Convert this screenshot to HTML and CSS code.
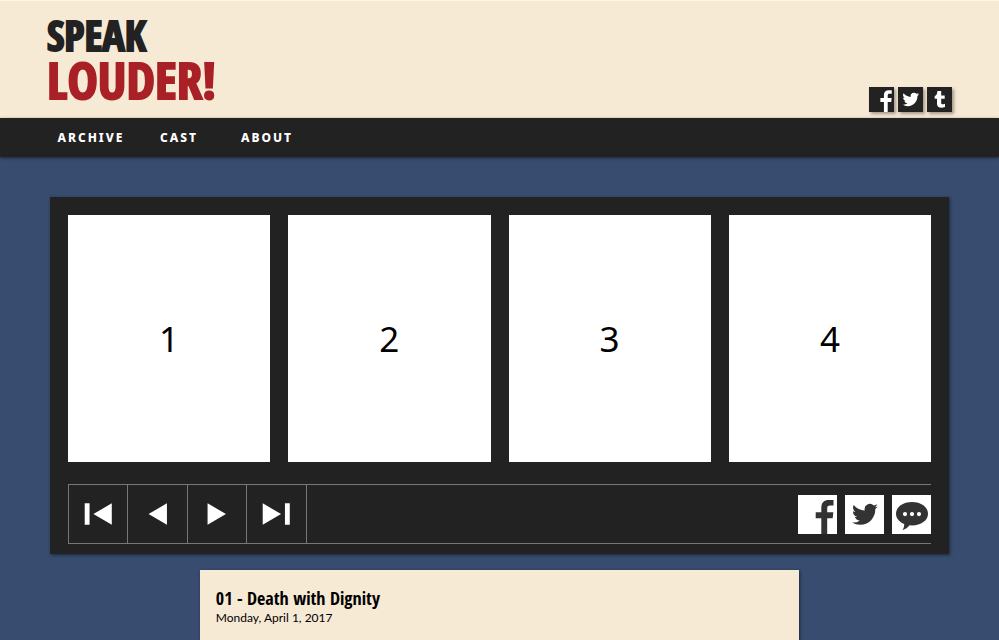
FILE: index.html
```html
<!DOCTYPE html>
<html lang="en">
<head>
  <meta charset="utf-8">
  <meta name="viewport" content="width=device-width, initial-scale=1">
  <title>Speak Louder!</title>
  <link rel="stylesheet" href="styles.css">
</head>
<body>
  <svg class="symbols" aria-hidden="true">
    <symbol id="facebook" viewBox="0 0 39 39">
      <path d="M23.3 39V23.3H17.7V17.3H23.3V13C23.3 7.6 26 5 31 5H35.5V10.6H32.2C29.8 10.6 29.2 11.5 29.2 13.5V17.3H35.3L34.7 23.3H29.2V39Z"/>
    </symbol>
    <symbol id="twitter" viewBox="0 0 39 39">
      <path transform="translate(7 7.6) scale(1.08)" d="M23.95 3.55a10 10 0 0 1-2.82.77 4.96 4.96 0 0 0 2.16-2.72c-.95.55-2 .96-3.13 1.18a4.92 4.92 0 0 0-8.38 4.48C7.69 7.07 4.07 5.1 1.64 2.14a4.9 4.9 0 0 0 1.52 6.56 4.9 4.9 0 0 1-2.23-.61v.06a4.92 4.92 0 0 0 3.95 4.82 5 5 0 0 1-2.21.08 4.94 4.94 0 0 0 4.6 3.42A9.87 9.87 0 0 1 0 18.4a14 14 0 0 0 7.55 2.2c9.05 0 14-7.5 14-13.98 0-.21 0-.42-.02-.63a9.94 9.94 0 0 0 2.46-2.54z"/>
    </symbol>
    <symbol id="tumblr" viewBox="0 0 25 25">
      <path d="M10.4 4H14.2V8.5H17.7V11.8H14.2V16C14.2 17.6 15.8 17.7 18 16.8V19.9C13.5 21.6 10 20.4 10 17V11.8H7.7V9C9.4 8.4 10.2 7 10.4 4Z"/>
    </symbol>
    <symbol id="comment" viewBox="0 0 39 39">
      <path fill-rule="evenodd" d="M20 7C29 7 36 12 36 18.8C36 25.6 29 30.4 20 30.4L17.6 30.3C15.8 32.6 13.4 34.4 10.4 35.2C11.6 33.4 12.3 31.5 12.2 29C7.3 27 4 23.3 4 18.8C4 12 11 7 20 7ZM13 17a2.1 2.1 0 1 0 0 4.2a2.1 2.1 0 1 0 0-4.2ZM20 17a2.1 2.1 0 1 0 0 4.2a2.1 2.1 0 1 0 0-4.2ZM27 17a2.1 2.1 0 1 0 0 4.2a2.1 2.1 0 1 0 0-4.2Z"/>
    </symbol>
  </svg>

  <header class="masthead">
    <a class="logo" href="#"><span class="logo-top">SPEAK</span><span class="logo-bottom">LOUDER!</span></a>
    <div class="social">
      <a href="#" aria-label="Facebook"><svg><use href="#facebook"/></svg></a>
      <a href="#" aria-label="Twitter"><svg><use href="#twitter"/></svg></a>
      <a href="#" aria-label="Tumblr"><svg><use href="#tumblr"/></svg></a>
    </div>
  </header>

  <nav class="menu">
    <a href="#">ARCHIVE</a>
    <a href="#">CAST</a>
    <a href="#">ABOUT</a>
  </nav>

  <main>
    <section class="comic">
      <div class="panels">
        <div class="panel">1</div>
        <div class="panel">2</div>
        <div class="panel">3</div>
        <div class="panel">4</div>
      </div>
      <div class="controls">
        <div class="pager">
          <button type="button" aria-label="First"><svg viewBox="0 0 60 60"><path d="M16 19v22h5v-22zM44 19v22L25 30z"/></svg></button>
          <button type="button" aria-label="Previous"><svg viewBox="0 0 60 60"><path d="M40 19v22L21 30z"/></svg></button>
          <button type="button" aria-label="Next"><svg viewBox="0 0 60 60"><path d="M20 19v22L39 30z"/></svg></button>
          <button type="button" aria-label="Last"><svg viewBox="0 0 60 60"><path d="M16 19v22L35 30zM39 19h5v22h-5z"/></svg></button>
        </div>
        <div class="share">
          <a href="#" aria-label="Share on Facebook"><svg><use href="#facebook"/></svg></a>
          <a href="#" aria-label="Share on Twitter"><svg><use href="#twitter"/></svg></a>
          <a href="#" aria-label="Comments"><svg><use href="#comment"/></svg></a>
        </div>
      </div>
    </section>

    <article class="post">
      <h1>01 - Death with Dignity</h1>
      <p>Monday, April 1, 2017</p>
    </article>
  </main>
</body>
</html>
```
FILE: styles.css
```css
* {
  box-sizing: border-box;
}

body {
  display: flex;
  flex-direction: column;
  min-height: 100vh;
  margin: 0;
  background: #374c6e;
  font-family: "Noto Sans", sans-serif;
}

.symbols {
  display: none;
}

a {
  color: inherit;
  text-decoration: none;
}

svg {
  display: block;
  width: 100%;
  height: 100%;
  fill: currentColor;
}

.masthead {
  display: flex;
  justify-content: space-between;
  align-items: flex-end;
  padding: 13px 47px 6px;
  border-top: 1px solid #fbf5ea;
  background: #f7ead5;
}

.logo {
  display: flex;
  flex-direction: column;
  padding-bottom: 10px;
  font-family: "Open Sans Condensed", "Roboto Condensed", sans-serif;
  font-weight: bold;
  -webkit-text-stroke: 2px currentColor;
}

.logo-top {
  color: #222;
  font-size: 42px;
  line-height: 42px;
}

.logo-bottom {
  color: #a92027;
  font-size: 51px;
  line-height: 46px;
}

.social {
  display: flex;
  gap: 4px;
}

.social a {
  width: 25px;
  height: 25px;
  background: #222;
  color: #fff;
  box-shadow: 2px 2px 3px rgba(0, 0, 0, 0.35);
}

.menu {
  display: flex;
  padding: 0 47px;
  background: #222;
  color: #fff;
  box-shadow: 0 1px 3px rgba(0, 0, 0, 0.5);
}

.menu a {
  width: 88px;
  font-size: 12px;
  font-weight: 800;
  line-height: 39px;
  letter-spacing: 2px;
  text-align: center;
}

main {
  display: flex;
  flex: 1;
  flex-direction: column;
  align-items: center;
  gap: 16px;
  padding-top: 40px;
}

.comic {
  width: 90%;
  padding: 18px 18px 10px;
  background: #222;
  box-shadow: 1px 1px 3px rgba(0, 0, 0, 0.5);
}

.panels {
  display: grid;
  grid-template-columns: repeat(4, 1fr);
  gap: 18px;
}

.panel {
  display: flex;
  justify-content: center;
  align-items: center;
  aspect-ratio: 202 / 247;
  background: #fff;
  color: #000;
  font-size: 35px;
}

.controls {
  display: flex;
  justify-content: space-between;
  align-items: center;
  margin-top: 22px;
  border: solid #777;
  border-width: 1px 0;
}

.pager {
  display: flex;
  width: 239px;
  border-left: 1px solid #777;
}

.pager button {
  flex: 1;
  height: 58px;
  padding: 0;
  border: 0;
  border-right: 1px solid #777;
  background: none;
  color: #fff;
}

.share {
  display: flex;
  gap: 8px;
}

.share a {
  width: 39px;
  height: 39px;
  background: #fff;
  color: #333;
}

.post {
  flex: 1;
  width: 60%;
  padding: 16px;
  background: #f7ead5;
  color: #000;
  box-shadow: 1px 1px 3px rgba(0, 0, 0, 0.5);
}

.post h1 {
  margin: 0;
  font-family: "Open Sans Condensed", "Roboto Condensed", sans-serif;
  font-size: 18px;
  line-height: 24px;
}

.post p {
  margin: 0;
  font-family: Lato, "Noto Sans", sans-serif;
  font-size: 12px;
  line-height: 16px;
}
```
